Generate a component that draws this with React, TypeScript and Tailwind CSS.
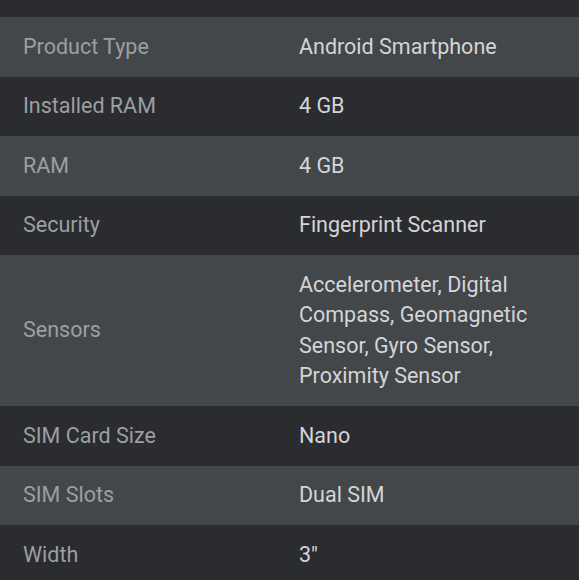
const specs: [string, string][] = [
    ["Product Type", "Android Smartphone"],
    ["Installed RAM", "4 GB"],
    ["RAM", "4 GB"],
    ["Security", "Fingerprint Scanner"],
    ["Sensors", "Accelerometer, Digital Compass, Geomagnetic Sensor, Gyro Sensor, Proximity Sensor"],
    ["SIM Card Size", "Nano"],
    ["SIM Slots", "Dual SIM"],
    ["Width", "3\""],
];

export default function App() {
    return (
        <main
            className="w-[579px] h-[580px] overflow-hidden bg-[#2b2c30] text-[21.5px] leading-[30.5px]"
            style={{ fontFamily: "Roboto, 'Liberation Sans', sans-serif" }}
        >
            {/* tail of previous row */}
            <div className="h-[17px] bg-[#2b2c30]" />

            {specs.map(([label, value], index) => (
                <div
                    key={label}
                    className={`grid grid-cols-[276px_1fr] items-center ${
                        index % 2 === 0 ? "bg-[#43474a]" : "bg-[#2b2c30]"
                    }`}
                >
                    <div className="pl-[23px] py-[14.5px] text-[#9c9fa2]">{label}</div>
                    <div className="pl-[23px] pr-[20px] py-[14.5px] text-[#d3d5d7]">{value}</div>
                </div>
            ))}
        </main>
    );
}
